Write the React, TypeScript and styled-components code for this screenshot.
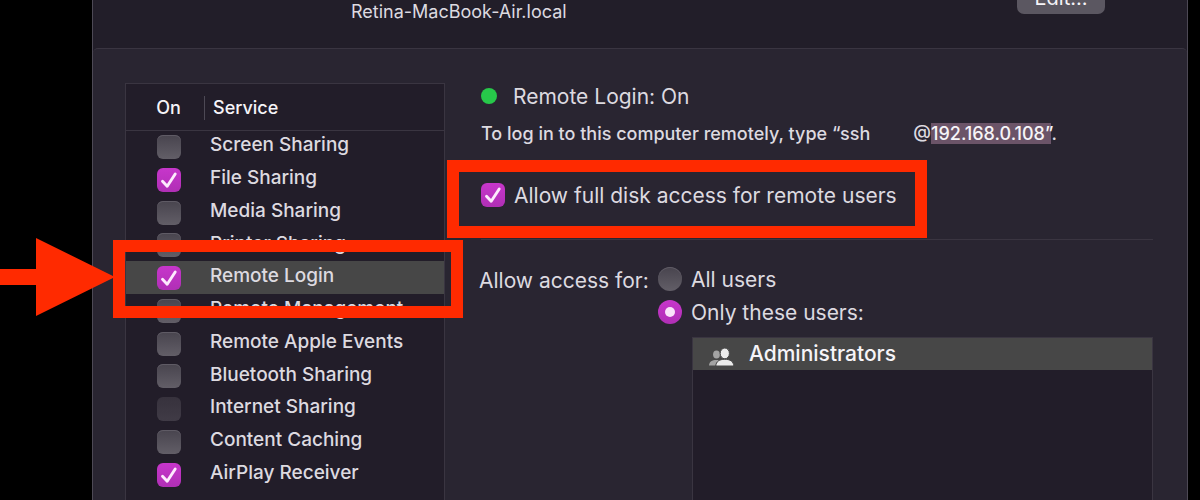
import React from "react";
import styled, { createGlobalStyle, css } from "styled-components";

const color = {
  window: "#221e29",
  panel: "#292531",
  list: "#221d29",
  line: "#3a3541",
  edge: "#4d4955",
  selected: "#474747",
  text: "#dddae0",
  bright: "#f6f4f8",
  mark: "#ff2a00",
};

const GlobalStyle = createGlobalStyle`
  *, *::before, *::after { box-sizing: border-box; }
  body {
    margin: 0;
    background: #000;
    color: ${color.text};
    font-family: Inter, "Liberation Sans", sans-serif;
    font-size: 19px;
    line-height: 24px;
  }
`;

const Screen = styled.div`
  position: relative;
  height: 100vh;
  padding: 0 12px 0 92px;
  overflow: hidden;
`;

const Window = styled.main`
  display: flex;
  flex-direction: column;
  min-height: 100%;
  background: ${color.window};
  border: solid ${color.edge};
  border-width: 0 1px;
`;

const Header = styled.header`
  display: flex;
  justify-content: space-between;
  align-items: flex-start;
  height: 48px;
  padding: 0 82px 0 258px;
`;

const HostName = styled.span`
  font-size: 18px;
  line-height: 24px;
`;

const EditButton = styled.button`
  width: 88px;
  height: 32px;
  margin-top: -18px;
  padding: 0;
  border: 0;
  border-radius: 7px;
  background: #5b5761;
  color: ${color.bright};
  font: inherit;
  font-size: 20px;
`;

const Panel = styled.section`
  display: flex;
  flex: 1;
  gap: 36px;
  padding: 34px 34px 0 32px;
  background: ${color.panel};
  border-top: 1px solid ${color.line};
  border-radius: 5px 5px 0 0;
`;

const ServiceList = styled.div`
  flex: 0 0 320px;
  background: ${color.list};
  border: solid ${color.line};
  border-width: 1px 1px 0;
`;

const ServiceTable = styled.table`
  width: 100%;
  border-collapse: collapse;
  table-layout: fixed;
`;

const HeadCell = styled.th<{ $narrow?: boolean }>`
  height: 46px;
  padding: ${(p) => (p.$narrow ? "2px 0 0 7px" : "2px 0 0")};
  width: ${(p) => (p.$narrow ? "78px" : "auto")};
  border-bottom: 1px solid ${color.line};
  color: ${color.bright};
  font-size: 18px;
  font-weight: 500;
  text-align: ${(p) => (p.$narrow ? "center" : "left")};
`;

const HeadLabel = styled.span`
  display: block;
  padding-left: 8px;
  border-left: 1px solid ${color.edge};
`;

const ServiceRow = styled.tr<{ $selected?: boolean }>`
  position: relative;
  height: 33px;
  background: ${(p) => (p.$selected ? color.selected : "transparent")};
  z-index: ${(p) => (p.$selected ? 1 : "auto")};

  &:nth-child(4n) {
    height: 32px;
  }
`;

const CheckCell = styled.td`
  padding: 0 0 0 31px;
  line-height: 0;
`;

const NameCell = styled.td`
  padding: 0 0 3px 6px;
  font-weight: 500;
`;

const control = css`
  appearance: none;
  display: inline-grid;
  place-items: center;
  flex: none;
  width: 24px;
  height: 24px;
  margin: 0;
  background: linear-gradient(#48444e, #625e67);
  box-shadow: inset 0 1px 0 #5f5b65;

  &:checked {
    background: linear-gradient(#c736cb, #b02fb5);
    box-shadow: none;
  }
  &:disabled {
    background: linear-gradient(#37323d, #403b46);
    box-shadow: none;
  }
`;

const Checkbox = styled.input.attrs({ type: "checkbox" })`
  ${control}
  border-radius: 6px;
`;

const Radio = styled.input.attrs({ type: "radio" })`
  ${control}
  border-radius: 50%;

  &:checked::after {
    content: "";
    width: 10px;
    height: 10px;
    border-radius: 50%;
    background: #fbe3fb;
  }
`;

const TickBox = styled.span`
  display: inline-grid;
  flex: none;

  > * {
    grid-area: 1 / 1;
  }
  > svg {
    pointer-events: none;
  }
`;

const Callout = styled.span`
  position: absolute;
  z-index: 1;
  border: 12px solid ${color.mark};
  pointer-events: none;
`;

const RowCallout = styled(Callout)`
  inset: -21px -19px -24px -13px;
`;

const OptionCallout = styled(Callout)`
  inset: -23px -30px -31px -34px;
`;

const Arrow = styled.svg`
  position: absolute;
  top: -23px;
  right: 100%;
  margin-right: 11px;
  overflow: visible;
`;

const Details = styled.div`
  display: flex;
  flex: 1;
  flex-direction: column;
  align-items: flex-start;
  min-width: 0;
  font-size: 21px;
`;

const Status = styled.div`
  display: flex;
  align-items: center;
  gap: 16px;
  height: 26px;
`;

const Dot = styled.span`
  width: 16px;
  height: 16px;
  border-radius: 50%;
  background: #27c84a;
`;

const Caption = styled.span`
  padding-top: 2px;
`;

const Hint = styled.p`
  display: flex;
  margin: 14px 0 0;
  font-size: 18px;
  font-weight: 500;
  line-height: 22px;
  white-space: nowrap;
`;

const Address = styled.span`
  margin-left: 43px;
`;

const Highlight = styled.mark`
  background: #6b5468;
  color: ${color.bright};
`;

const Option = styled.label`
  position: relative;
  display: flex;
  align-items: center;
  gap: 9px;
  height: 24px;
  white-space: nowrap;
`;

const DiskOption = styled(Option)`
  margin-top: 38px;
`;

const Divider = styled.hr`
  align-self: stretch;
  height: 1px;
  margin: 32px 0 0;
  border: 0;
  background: ${color.line};
`;

const Access = styled.div`
  display: grid;
  grid-template-columns: 179px 1fr;
  flex: 1;
  align-self: stretch;
  margin-left: -2px;
  padding-top: 27px;
`;

const Choices = styled.div`
  display: flex;
  flex-direction: column;
  gap: 9px;
`;

const UserList = styled.ul`
  flex: 1;
  min-height: 160px;
  margin: 4px 0 0 34px;
  padding: 0;
  list-style: none;
  background: ${color.list};
  border: solid ${color.line};
  border-width: 1px 1px 0;
`;

const User = styled.li`
  display: flex;
  align-items: center;
  gap: 15px;
  height: 32px;
  padding: 0 16px;
  background: ${color.selected};
  color: ${color.bright};
  font-weight: 500;

  > svg {
    margin-top: 5px;
  }
`;

type Service = { name: string; on?: boolean; unavailable?: boolean };

const services: Service[] = [
  { name: "Screen Sharing" },
  { name: "File Sharing", on: true },
  { name: "Media Sharing" },
  { name: "Printer Sharing" },
  { name: "Remote Login", on: true },
  { name: "Remote Management" },
  { name: "Remote Apple Events" },
  { name: "Bluetooth Sharing" },
  { name: "Internet Sharing", unavailable: true },
  { name: "Content Caching" },
  { name: "AirPlay Receiver", on: true },
];

const selectedService = "Remote Login";

function Tick(props: { id: string; on?: boolean; disabled?: boolean }) {
  return (
    <TickBox>
      <Checkbox id={props.id} defaultChecked={props.on} disabled={props.disabled} />
      {props.on && (
        <svg width="24" height="24" viewBox="0 0 24 24" fill="none" aria-hidden="true">
          <path
            d="M5.500 13.200 10.200 18.200 18.200 6"
            stroke="#fdeafd"
            strokeWidth="2.9"
            strokeLinecap="round"
            strokeLinejoin="round"
          />
        </svg>
      )}
    </TickBox>
  );
}

function PeopleIcon() {
  return (
    <svg width="25" height="18" viewBox="0 0 25 18" aria-hidden="true">
      <g fill="#a3a3a3">
        <ellipse cx="7.5" cy="6.4" rx="3.4" ry="4" />
        <path d="M0 17.500c.3-3.800 3-5.500 7.500-5.500 1 0 1.800.1 2.600.4-2 1.100-3.100 2.700-3.500 5.100z" />
      </g>
      <g fill="#ebebeb" stroke="#474747" strokeWidth="1">
        <ellipse cx="15.800" cy="5.400" rx="4.600" ry="5.400" />
        <path d="M6.800 18c.3-4.500 3.500-6.700 9-6.700s8.700 2.200 9 6.700z" />
      </g>
    </svg>
  );
}

export default function App() {
  return (
    <Screen>
      <GlobalStyle />
      <Window>
        <Header>
          <HostName>Retina-MacBook-Air.local</HostName>
          <EditButton type="button">Edit…</EditButton>
        </Header>
        <Panel>
          <ServiceList>
            <ServiceTable>
              <thead>
                <tr>
                  <HeadCell $narrow scope="col">On</HeadCell>
                  <HeadCell scope="col">
                    <HeadLabel>Service</HeadLabel>
                  </HeadCell>
                </tr>
              </thead>
              <tbody>
                {services.map((service) => {
                  const id = service.name.toLowerCase().replace(/ /g, "-");
                  const selected = service.name === selectedService;
                  return (
                    <ServiceRow key={id} $selected={selected}>
                      <CheckCell>
                        <Tick id={id} on={service.on} disabled={service.unavailable} />
                      </CheckCell>
                      <NameCell>
                        <label htmlFor={id}>{service.name}</label>
                        {selected && (
                          <>
                            <RowCallout />
                            <Arrow width="115" height="78" viewBox="0 0 115 78" aria-hidden="true">
                              <path d="M0 31H36V0L115 39 36 78V47H0z" fill={color.mark} />
                            </Arrow>
                          </>
                        )}
                      </NameCell>
                    </ServiceRow>
                  );
                })}
              </tbody>
            </ServiceTable>
          </ServiceList>
          <Details>
            <Status>
              <Dot />
              <Caption>Remote Login: On</Caption>
            </Status>
            <Hint>
              <span>To log in to this computer remotely, type “ssh</span>
              <Address>
                @<Highlight>192.168.0.108”</Highlight>.
              </Address>
            </Hint>
            <DiskOption htmlFor="full-disk">
              <Tick id="full-disk" on />
              <Caption>Allow full disk access for remote users</Caption>
              <OptionCallout />
            </DiskOption>
            <Divider />
            <Access role="radiogroup" aria-labelledby="access-label">
              <Caption id="access-label">Allow access for:</Caption>
              <Choices>
                <Option>
                  <Radio name="access" />
                  <Caption>All users</Caption>
                </Option>
                <Option>
                  <Radio name="access" defaultChecked />
                  <Caption>Only these users:</Caption>
                </Option>
                <UserList>
                  <User>
                    <PeopleIcon />
                    <span>Administrators</span>
                  </User>
                </UserList>
              </Choices>
            </Access>
          </Details>
        </Panel>
      </Window>
    </Screen>
  );
}
